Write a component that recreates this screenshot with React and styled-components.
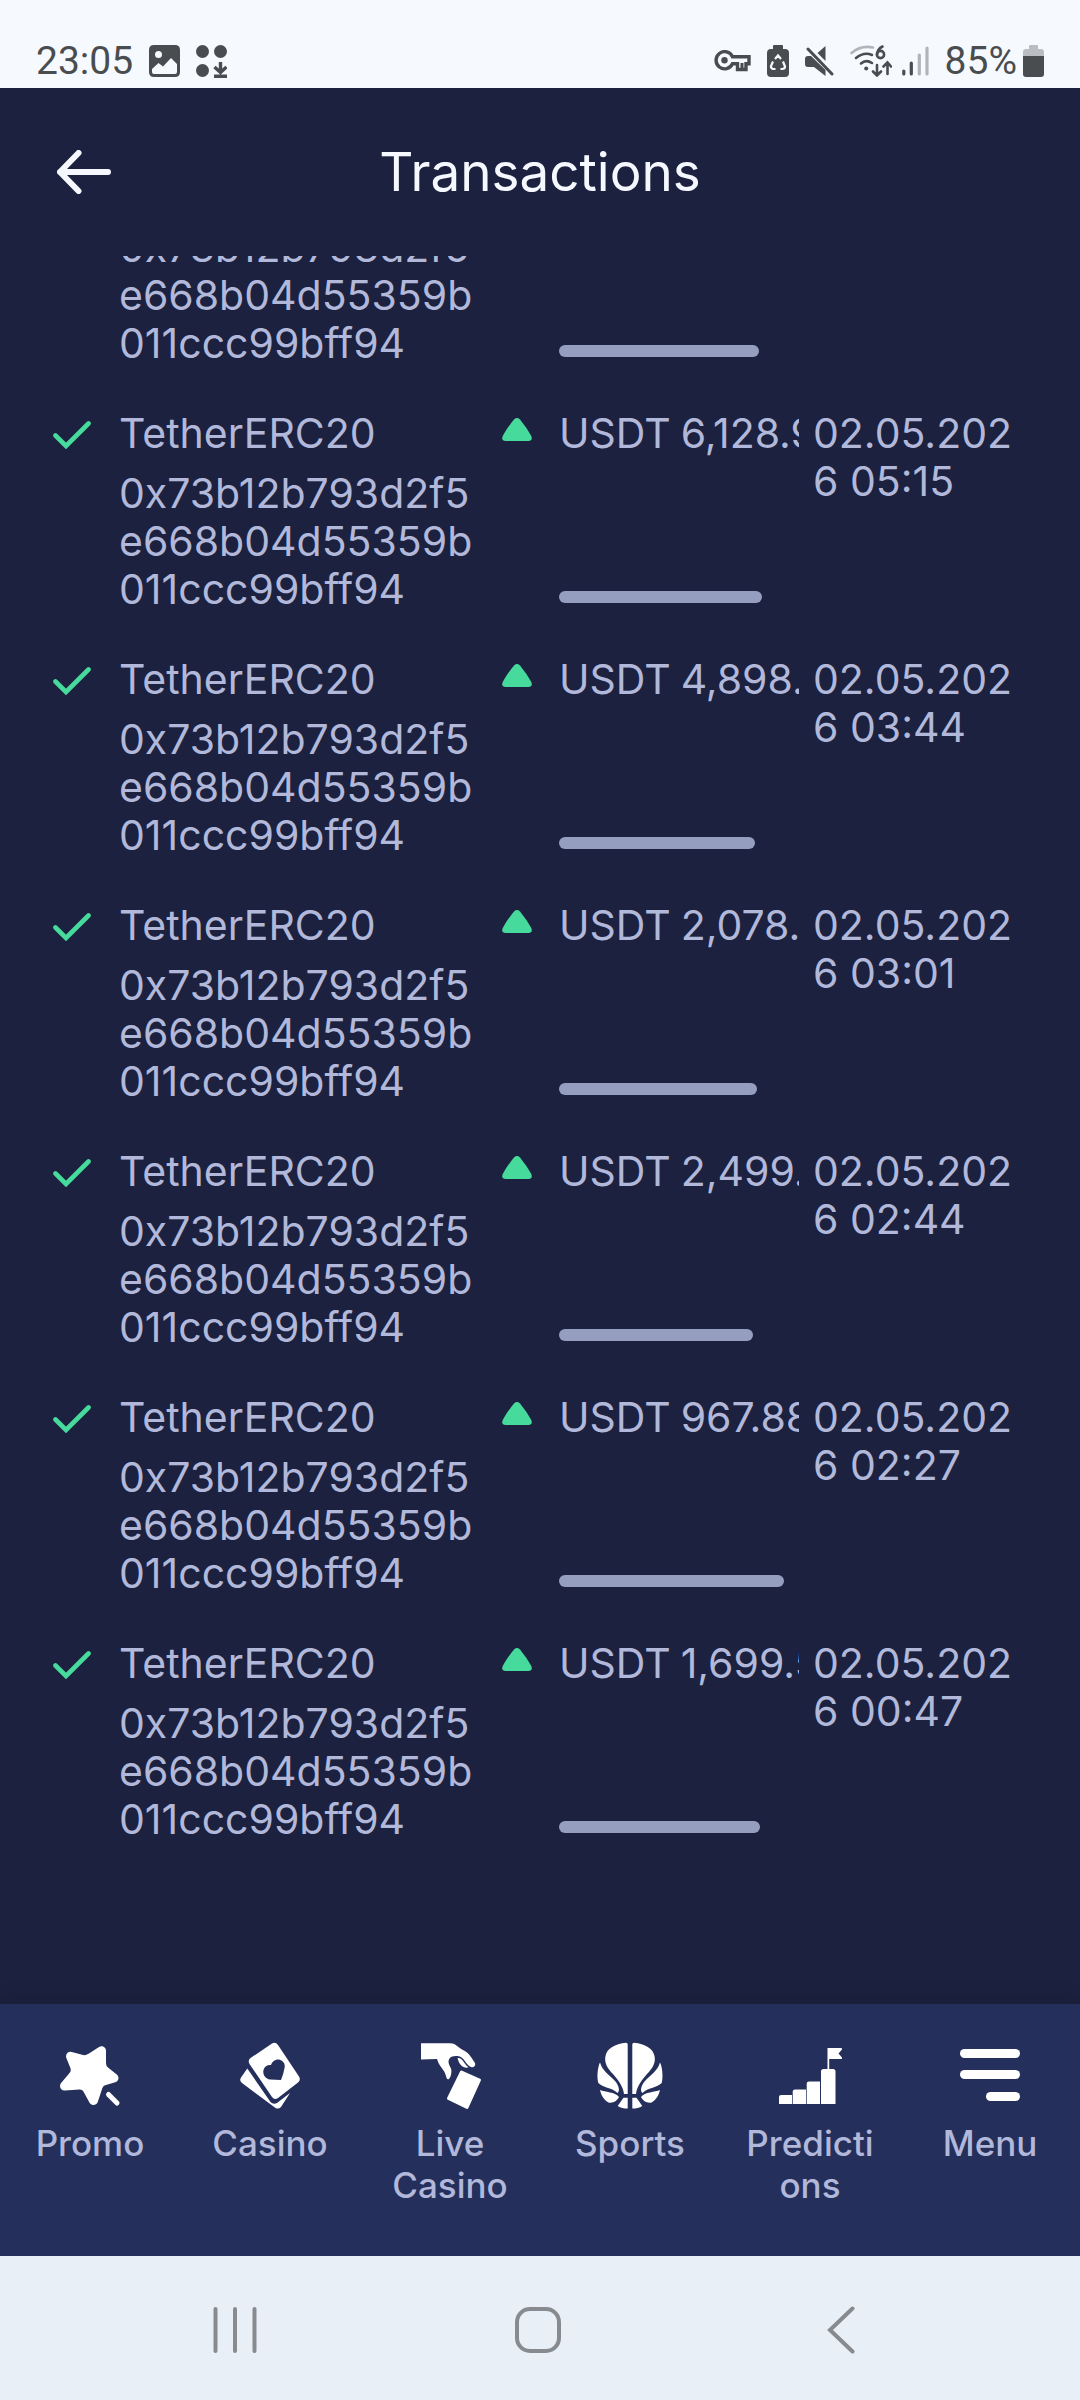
import React from 'react'
import styled, { createGlobalStyle } from 'styled-components'


const HASH = ['0x73b12b793d2f5', 'e668b04d55359b', '011ccc99bff94']

const transactions = [
  { amount: '5,310.42', date: '02.05.2026 05:48', thumb: 200 },
  { amount: '6,128.94', date: '02.05.2026 05:15', thumb: 203 },
  { amount: '4,898.17', date: '02.05.2026 03:44', thumb: 196 },
  { amount: '2,078.36', date: '02.05.2026 03:01', thumb: 198 },
  { amount: '2,499.05', date: '02.05.2026 02:44', thumb: 194 },
  { amount: '967.88', date: '02.05.2026 02:27', thumb: 225 },
  { amount: '1,699.52', date: '02.05.2026 00:47', thumb: 201 },
]

const SCROLL_WIDTH = 240


const StatusBar = () => {
  return (
    <StatusWrapper>
      <div className="group">
        <span>23:05</span>
        <svg width="31" height="32" viewBox="0 0 31 32" fill="currentColor">
          <path fillRule="evenodd" d="M5 0H26Q31 0 31 5V27Q31 32 26 32H5Q0 32 0 27V5Q0 0 5 0ZM9.500 6A3.500 3.500 0 1 0 9.500 13A3.500 3.500 0 1 0 9.500 6ZM3 24V27Q3 29 5 29H26Q28 29 28 27V19L22 13L14 21.500L9.500 18Z" />
        </svg>
        <svg width="31" height="33" viewBox="0 0 31 33" fill="currentColor">
          <circle cx="6.500" cy="6.500" r="6.500" />
          <circle cx="24.500" cy="6.500" r="6.500" />
          <circle cx="6.500" cy="25.500" r="6.500" />
          <path d="M24.500 17V27M18.500 22L24.500 27.500L30.500 22M18 31.300H31" fill="none" stroke="currentColor" strokeWidth="3.400" />
        </svg>
      </div>
      <div className="group">
        <svg width="37" height="22" viewBox="0 0 37 22" fill="none" stroke="currentColor" strokeWidth="3.400">
          <path d="M18.500 6.700A8.600 8.600 0 1 0 18.500 13.800H23.500V19.500H32V13.800H35V6.700Z" />
          <circle cx="10.500" cy="10.200" r="3.200" fill="currentColor" stroke="none" />
          <path d="M28 13V18" strokeWidth="3" />
        </svg>
        <svg width="22" height="32" viewBox="0 0 22 32" fill="currentColor">
          <path d="M7 0H15Q16 0 16 1V4H18Q22 4 22 8V28Q22 32 18 32H4Q0 32 0 28V8Q0 4 4 4H6V1Q6 0 7 0Z" />
          <path d="M8 14L11 10.500L14 14M16 16.500L18 21.500Q18 24 15 24H13.500M8.500 24H6Q3.500 23 4 21L6 16.500" fill="none" stroke="#f6faff" strokeWidth="2.200" />
        </svg>
        <svg width="29" height="30" viewBox="0 0 29 30" fill="currentColor">
          <path d="M20.500 0V15L12.500 7Z" />
          <path d="M3 10H6L20.500 24V30L9 21H3Q0 21 0 18V13Q0 10 3 10Z" />
          <path d="M3 3L27 28" fill="none" stroke="currentColor" strokeWidth="3" strokeLinecap="round" />
        </svg>
        <div className="signal">
          <svg width="42" height="32" viewBox="0 0 42 32" fill="none" stroke="currentColor" strokeWidth="2.600" strokeLinecap="round">
            <path d="M1.500 8Q11 0 23 2.500" opacity="0.4" />
            <path d="M6 13Q14 6.500 22 10M11 18.500Q16 14 22 18" />
            <circle cx="16.200" cy="23.500" r="2" fill="currentColor" stroke="none" />
            <path d="M32.500 1.500Q27.500 4 27 9.500" />
            <circle cx="30.500" cy="9.500" r="3.600" />
            <path d="M27 20V30M23 26.500L27 30.500L31 26.500M37.500 29V18M33.500 21.500L37.500 17.500L41 21.500" />
          </svg>
          <svg width="27" height="30" viewBox="0 0 27 30" fill="none" stroke="currentColor" strokeWidth="3.200" strokeLinecap="round">
            <path d="M1.800 25V28M9.300 17V28" />
            <path d="M17.300 9V28M25 2V28" opacity="0.4" />
          </svg>
        </div>
        <div className="battery">
          <span>85%</span>
          <svg width="21" height="32" viewBox="0 0 21 32" fill="currentColor">
            <path d="M6 1Q6 0 7 0H14Q15 0 15 1V4H18Q21 4 21 7V11H0V7Q0 4 3 4H6Z" opacity="0.35" />
            <path d="M0 11H21V29Q21 32 18 32H3Q0 32 0 29Z" />
          </svg>
        </div>
      </div>
    </StatusWrapper>
  )
}


const Header = () => {
  return (
    <HeaderWrapper>
      <BackButton type="button" aria-label="Back">
        <svg width="54" height="44" viewBox="0 0 54 44" fill="none" stroke="currentColor" strokeWidth="6" strokeLinecap="round" strokeLinejoin="round">
          <path d="M51 22H3M21.500 3L3 22L21.500 41" />
        </svg>
      </BackButton>
      <h1>Transactions</h1>
    </HeaderWrapper>
  )
}


const Transaction = ({ amount, date, thumb }) => {
  return (
    <Row>
      <td className="status">
        <svg width="38" height="28" viewBox="0 0 38 28" fill="none" stroke="currentColor" strokeWidth="4.600" strokeLinecap="round">
          <path d="M2.500 14.500L13 25L35.500 2.500" />
        </svg>
      </td>
      <td>
        <p className="method">TetherERC20</p>
        {HASH.map((part) => <p key={part}>{part}</p>)}
      </td>
      <td className="direction">
        <svg width="30" height="23" viewBox="0 0 30 23" fill="currentColor">
          <path d="M12 1.500Q15 -1.300 18 1.500Q25 10 29.300 18Q31 23 26.500 23H3.500Q-1 23 .7 18Q5 10 12 1.500Z" />
        </svg>
      </td>
      <td>
        <Amount>
          <span>USDT</span>
          <span>{amount}</span>
        </Amount>
        <Track>
          <Thumb style={{ width: `${(thumb / SCROLL_WIDTH) * 100}%` }} />
        </Track>
      </td>
      <td className="date">{date}</td>
    </Row>
  )
}


const PromoIcon = () => (
  <NavSvg viewBox="0 0 66 66">
    <path d="M13.500 14.300L24 17.200Q29.500 18.700 34 15.500L44.500 8.700V21Q44.500 26.500 48.500 29.300L57 36L47 38.800Q42.500 40.200 41 45L36.500 58.500L30.500 47.500Q27.500 42.500 22 43L7.500 44L16 34Q19.500 29.500 17.800 25Z" stroke="currentColor" strokeWidth="9" strokeLinejoin="round" />
    <path d="M51.500 52.500L60 61" stroke="currentColor" strokeWidth="5" strokeLinecap="round" />
  </NavSvg>
)

const CasinoIcon = () => (
  <NavSvg viewBox="0 0 66 66">
    <path fillRule="evenodd" d="M35 1.500Q38.500 -.5 41 3L62 34.500Q64 38 61 40.500L41 56Q37.500 58.500 35 55L12.500 22Q10.500 18.500 13.500 16ZM44 38Q46.500 32 47.500 26C48.500 22 46.500 18.500 42 17.500C38.500 17 35 19.500 34 23C31 22.500 27.500 24 26.500 28C25.500 32 28 37 33 37.500Z" />
    <path d="M10.300 26.500L33.500 60Q36.500 63 40 61L53 51L44 65Q41.500 67.500 38.500 66L5 41Q2 38.500 4 35.500Z" />
  </NavSvg>
)

const LiveCasinoIcon = () => (
  <NavSvg viewBox="0 0 66 66">
    <path d="M4 1.300H33.500C38 1.300 41 5 45 7.500C49 9.500 52 11.500 54 15L58 21C59 24 56.500 26 54 25C50 23.500 48 18 44.500 15.500C41 13.500 35 13.500 32.500 16.500C30.500 19.500 32 22.500 34 26.500C35 30 34 35 32 37C30.500 38 29.500 36.500 29 34C28 29 23 24.500 21.500 21L20 17L4 17.500Z" />
    <path d="M40.500 15.800C44 16 45.500 18 47.500 21C49 23.500 50.500 24 51.500 25.500C46 26.500 42 23 40.500 15.800Z" />
    <path d="M44.500 30L62.500 38L50 65.500L31.500 56.500Z" stroke="currentColor" strokeWidth="3" strokeLinejoin="round" />
  </NavSvg>
)

const HalfBall = () => (
  <>
    <path d="M29 .7Q30.700 .7 30.700 2.500V52H27C26 44 21 38 16 32C10.500 26.500 7 21 8.500 14C10 6 18 2 29 .7Z" />
    <path d="M3 20.500C1 24 -.5 34 1.300 41C6 46 14 45 20.500 51C23.500 49 21.500 43 18 39C12.500 33 5.500 29 3 20.500Z" />
    <path d="M3 48C8 50 18 50 22 55C20 59 16 61.500 11.500 60.500C7 58 4 53 3 48Z" />
    <path d="M26.500 55.700H30.700V66.500C27 66.500 23.500 66 20.700 64Z" />
  </>
)

const SportsIcon = () => (
  <NavSvg viewBox="0 0 66 66">
    <HalfBall />
    <g transform="matrix(-1 0 0 1 66 0)">
      <HalfBall />
    </g>
  </NavSvg>
)

const PredictionsIcon = () => (
  <NavSvg viewBox="0 0 66 66">
    <path d="M2 62V55Q2 53 4 53H15V62ZM15.700 62V49.500Q15.700 47.500 18 47.500H29V62ZM29.700 62V41.500Q29.700 39.500 32 39.500H43V62ZM44 62V29.500Q44 27 46.500 27H56Q58.500 27 58.500 29.500V62Z" />
    <path d="M50.500 28V6H64Q65.500 6 65 7.500L61.500 11.500L65 15.500Q65.500 17 64 17H52.200V28Z" />
  </NavSvg>
)

const MenuIcon = () => (
  <NavSvg viewBox="0 0 66 66">
    <rect x="3" y="7" width="60" height="9" rx="4.500" />
    <rect x="3" y="28" width="60" height="9" rx="4.500" />
    <rect x="29" y="50" width="34" height="9" rx="4.500" />
  </NavSvg>
)

const navItems = [
  { label: 'Promo', icon: <PromoIcon /> },
  { label: 'Casino', icon: <CasinoIcon /> },
  { label: 'Live Casino', icon: <LiveCasinoIcon /> },
  { label: 'Sports', icon: <SportsIcon /> },
  { label: 'Predictions', icon: <PredictionsIcon /> },
  { label: 'Menu', icon: <MenuIcon /> },
]


const SystemNav = () => {
  return (
    <SystemWrapper>
      <button type="button" aria-label="Recent apps">
        <svg width="44" height="48" viewBox="0 0 44 48">
          <path d="M2.500 3V45M22 3V45M41.500 3V45" />
        </svg>
      </button>
      <button type="button" aria-label="Home">
        <svg width="48" height="48" viewBox="0 0 48 48">
          <rect x="3" y="3" width="42" height="42" rx="13" />
        </svg>
      </button>
      <button type="button" aria-label="Back">
        <svg width="28" height="48" viewBox="0 0 28 48">
          <path d="M25.500 2.500L3 24L25.500 45.500" />
        </svg>
      </button>
    </SystemWrapper>
  )
}


const App = () => {
  return (
    <>
      <GlobalStyle />
      <Screen>
        <StatusBar />
        <Header />
        <ListArea>
          <table>
            <colgroup>
              <col width="83" />
              <col />
              <col width="57" />
              <col width="240" />
              <col width="245" />
            </colgroup>
            <tbody>
              {transactions.map((item) => <Transaction key={item.date} {...item} />)}
            </tbody>
          </table>
        </ListArea>
        <BottomNav>
          {navItems.map(({ label, icon }) => (
            <a href="#" key={label}>
              {icon}
              <span>{label}</span>
            </a>
          ))}
        </BottomNav>
        <SystemNav />
      </Screen>
    </>
  )
}


const GlobalStyle = createGlobalStyle`
    * {
        box-sizing: border-box;
        margin: 0;
        padding: 0;
    }

    body {
        background: #1b213e;
        font-family: Inter, "Liberation Sans", sans-serif;
    }

    button {
        border: none;
        background: none;
        color: inherit;
    }

    svg {
        display: block;
        flex-shrink: 0;
    }
`

const Screen = styled.div`
    height: 100vh;
    display: flex;
    flex-direction: column;
    background: #1b213e;
    color: #b1b8da;
`

const StatusWrapper = styled.div`
    height: 88px;
    padding: 34px 36px 0;
    display: flex;
    align-items: center;
    justify-content: space-between;
    background: #f6faff;
    color: #4a4d4f;
    font-family: Roboto, sans-serif;
    font-size: 39px;

    .group {
        display: flex;
        align-items: center;
        gap: 16px;
    }

    .signal {
        display: flex;
        align-items: center;
        gap: 10px;
    }

    .battery {
        display: flex;
        align-items: center;
        gap: 6px;
    }
`

const HeaderWrapper = styled.header`
    height: 168px;
    padding: 0 57px;
    display: grid;
    grid-template-columns: 54px 1fr 54px;
    align-items: center;
    color: #f6f8ff;

    h1 {
        font-size: 53px;
        font-weight: 400;
        text-align: center;
    }
`

const BackButton = styled.button`
    display: flex;
`

const ListArea = styled.main`
    flex: 1;
    min-height: 0;
    padding: 0 36px 119px;
    display: flex;
    flex-direction: column;
    justify-content: flex-end;
    overflow: hidden;

    table {
        width: 100%;
        table-layout: fixed;
        border-collapse: collapse;
    }
`

const Row = styled.tr`
    font-size: 41px;
    font-weight: 400;
    line-height: 48px;

    td {
        padding-bottom: 42px;
        vertical-align: top;
        white-space: nowrap;
    }

    .status {
        padding: 12px 0 0 17px;
        color: #47da9d;
    }

    .method {
        margin-bottom: 12px;
    }

    .direction {
        padding-top: 9px;
        color: #47da9d;
    }

    .date {
        padding-left: 14px;
        padding-right: 18px;
        white-space: normal;
        word-break: break-all;
    }
`

const Amount = styled.div`
    display: flex;
    gap: 10px;
    overflow: hidden;
`

const Track = styled.div`
    margin-top: 134px;
`

const Thumb = styled.div`
    height: 12px;
    border-radius: 6px;
    background: #969ebf;
`

const BottomNav = styled.nav`
    height: 252px;
    padding-top: 38px;
    display: grid;
    grid-template-columns: repeat(6, 1fr);
    background: #252f5b;
    box-shadow: 0 -4px 20px rgba(0, 0, 0, 0.1);

    a {
        padding: 0 20px;
        display: flex;
        flex-direction: column;
        align-items: center;
        gap: 14px;
        color: inherit;
        text-decoration: none;
    }

    span {
        width: 100%;
        font-size: 35px;
        font-weight: 500;
        line-height: 42px;
        text-align: center;
        overflow-wrap: anywhere;
    }
`

const NavSvg = styled.svg`
    width: 66px;
    height: 66px;
    overflow: visible;
    fill: currentColor;
    color: #fff;
`

const SystemWrapper = styled.div`
    height: 144px;
    padding: 4px 88px 0 84px;
    display: grid;
    grid-template-columns: repeat(3, 1fr);
    align-items: center;
    background: #e8eff7;
    color: #878b8f;

    button {
        display: flex;
        justify-content: center;
    }

    svg {
        fill: none;
        stroke: currentColor;
        stroke-width: 4px;
        stroke-linecap: round;
    }
`
export default App
